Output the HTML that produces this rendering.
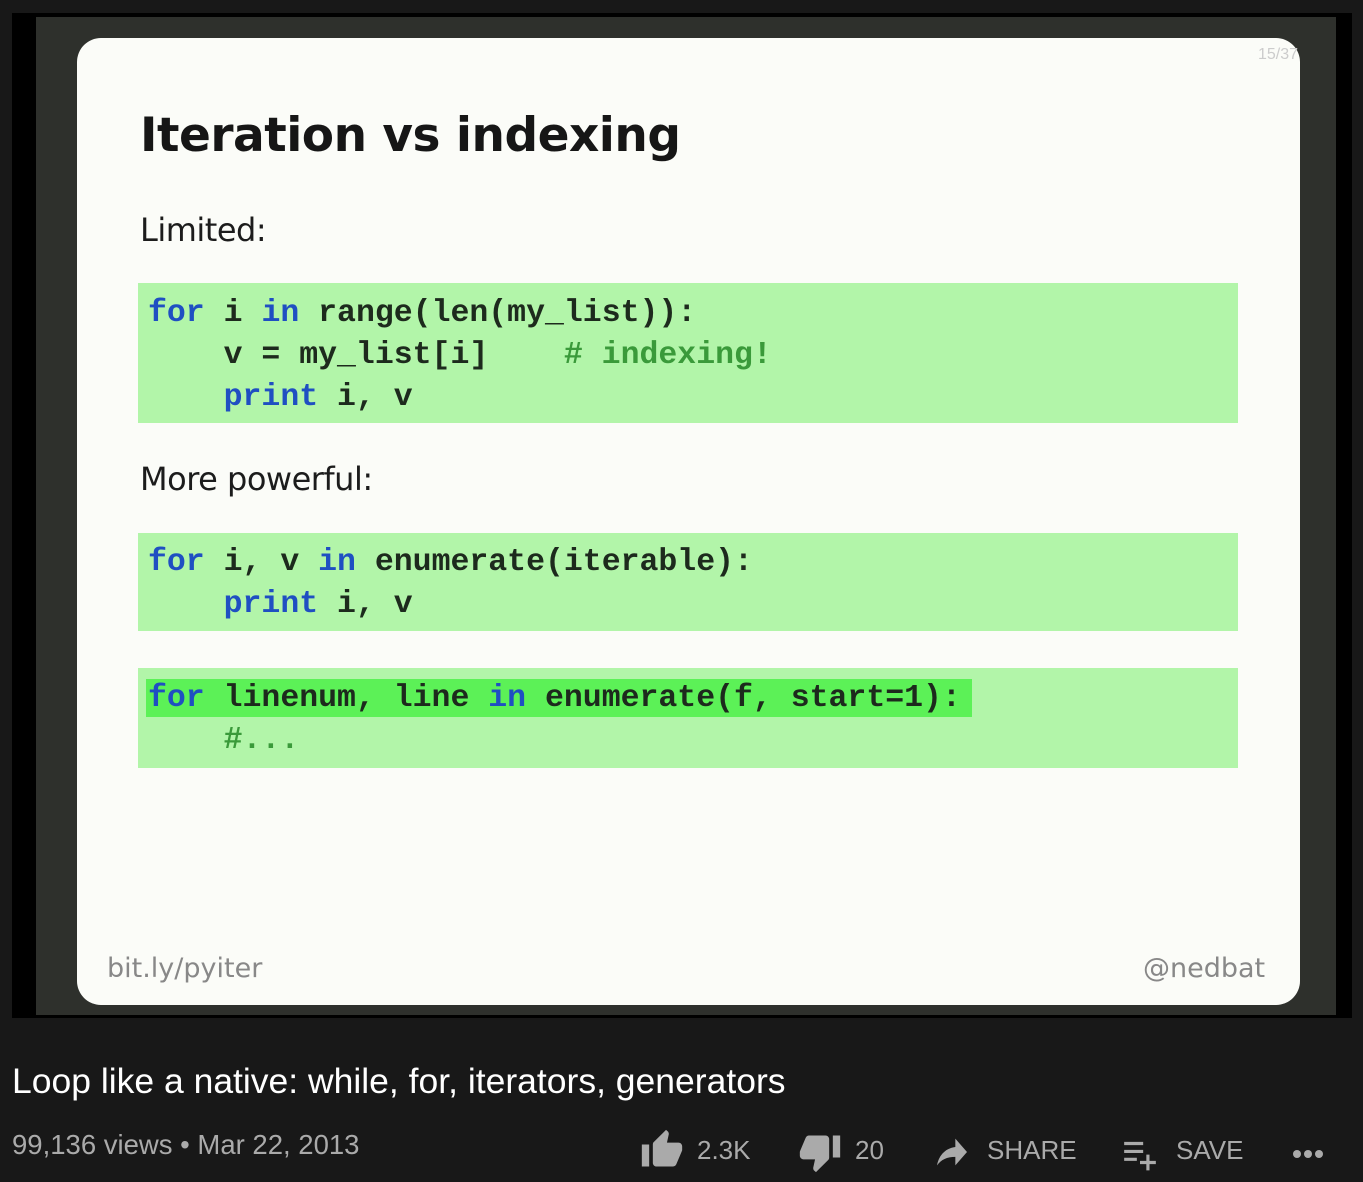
<!DOCTYPE html>
<html><head><style>
body{margin:0;width:1363px;height:1182px;background:#181818;position:relative;overflow:hidden;font-family:"Liberation Sans",sans-serif}
.vid{position:absolute;left:12px;top:13px;width:1340px;height:1005px;background:#000}
.inner{position:absolute;left:24px;top:4px;width:1300px;height:998px;background:#2e302c}
.slide{position:absolute;left:77px;top:38px;width:1223px;height:967px;background:#fbfcf8;border-radius:24px}
.a{position:absolute;white-space:pre}
.h1{left:140px;top:108px;font-size:47px;font-weight:bold;color:#161616;font-family:"DejaVu Sans",sans-serif;letter-spacing:-0.5px}
.lbl{font-size:32px;color:#1c1c1c;font-family:"DejaVu Sans",sans-serif;letter-spacing:-0.5px}
.box{position:absolute;left:138px;width:1100px;background:#b2f5a9}
.code{font-family:"Liberation Mono",monospace;font-weight:bold;font-size:31.5px;line-height:42px;color:#1d2a1d}
.k{color:#1f4fc2}.c{color:#3a9a3a}
.foot{font-size:27px;color:#888;font-family:"DejaVu Sans",sans-serif}
.meta{color:#aaa;font-size:27.5px}
.btn{color:#aaa;font-size:26px;position:absolute;top:1135px}
</style></head><body>
<div class="vid"><div class="inner"></div></div>
<div class="slide"></div>
<div class="a" style="left:1258px;top:46px;font-size:16px;color:#ccc">15/37</div>
<div class="a h1">Iteration vs indexing</div>
<div class="a lbl" style="left:140px;top:211px">Limited:</div>
<div class="box" style="top:283px;height:140px"></div>
<div class="a code" style="left:148px;top:293px"><span class="k">for</span> i <span class="k">in</span> range(len(my_list)):
    v = my_list[i]    <span class="c"># indexing!</span>
    <span class="k">print</span> i, v</div>
<div class="a lbl" style="left:140px;top:460px">More powerful:</div>
<div class="box" style="top:533px;height:98px"></div>
<div class="a code" style="left:148px;top:542px"><span class="k">for</span> i, v <span class="k">in</span> enumerate(iterable):
    <span class="k">print</span> i, v</div>
<div class="box" style="top:668px;height:100px"></div>
<div style="position:absolute;left:146px;top:679px;width:826px;height:38px;background:#5cf157"></div>
<div class="a code" style="left:148px;top:678px"><span class="k">for</span> linenum, line <span class="k">in</span> enumerate(f, start=1):
    <span class="c">#...</span></div>
<div class="a foot" style="left:107px;top:953px">bit.ly/pyiter</div>
<div class="a foot" style="left:1143px;top:953px">@nedbat</div>
<div class="a" style="left:12px;top:1061px;font-size:35.5px;color:#fff">Loop like a native: while, for, iterators, generators</div>
<div class="a meta" style="left:12px;top:1129px">99,136 views • Mar 22, 2013</div>
<svg style="position:absolute;left:638px;top:1128px" width="48" height="44" viewBox="0 0 24 24"><path fill="#aaa" d="M1 21h4V9H1v12zm22-11c0-1.1-.9-2-2-2h-6.3l1-4.6v-.3c0-.4-.2-.8-.4-1.1L14.2 1 7.6 7.6C7.2 7.9 7 8.4 7 9v10c0 1.1.9 2 2 2h9c.8 0 1.5-.5 1.8-1.2l3-7.1c.1-.2.2-.5.2-.7v-2z"/></svg>
<div class="btn" style="left:697px">2.3K</div>
<svg style="position:absolute;left:796px;top:1130px" width="48" height="44" viewBox="0 0 24 24"><path fill="#aaa" d="M15 3H6c-.8 0-1.5.5-1.8 1.2l-3 7.1c-.1.2-.2.5-.2.7v2c0 1.1.9 2 2 2h6.3l-1 4.6v.3c0 .4.2.8.4 1.1l1.1 1 6.6-6.6c.4-.3.6-.8.6-1.4V5c0-1.1-.9-2-2-2zm4 0v12h4V3h-4z"/></svg>
<div class="btn" style="left:855px">20</div>
<svg style="position:absolute;left:930px;top:1132px" width="44" height="40" viewBox="0 0 24 24"><path fill="#aaa" d="M14 4v5C7 10 4 15 3 20c2.5-3.5 6-5.1 11-5.1V20l7-8-7-8z"/></svg>
<div class="btn" style="left:987px">SHARE</div>
<svg style="position:absolute;left:1118px;top:1134px" width="44" height="38" viewBox="0 0 24 24"><path fill="#aaa" d="M2 5h12v2H2zM2 10h12v2H2zM2 15h8v2H2zM16 13h2v4h4v2h-4v4h-2v-4h-4v-2h4z"/></svg>
<div class="btn" style="left:1176px">SAVE</div>
<svg style="position:absolute;left:1292px;top:1148px" width="40" height="12"><circle cx="5" cy="6" r="4" fill="#aaa"/><circle cx="16" cy="6" r="4" fill="#aaa"/><circle cx="27" cy="6" r="4" fill="#aaa"/></svg>
</body></html>
